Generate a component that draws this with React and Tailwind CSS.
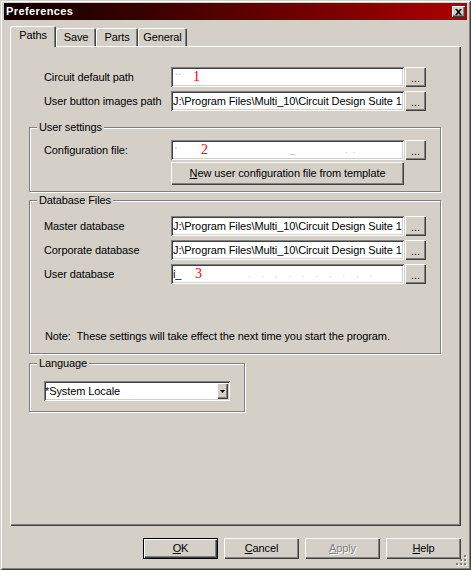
import React from "react";

// classic 3D bevels
const raised =
  "bg-[#d4d0c8] shadow-[inset_1px_1px_0_#fff,inset_-1px_-1px_0_#404040,inset_-2px_-2px_0_#808080]";
const sunken =
  "bg-white shadow-[inset_1px_1px_0_#808080,inset_-1px_-1px_0_#fff,inset_2px_2px_0_#404040,inset_-2px_-2px_0_#d4d0c8]";
const etched =
  "min-w-0 border border-[#808080] shadow-[inset_1px_1px_0_#fff,1px_1px_0_#fff]";

const SUITE_PATH = "J:\\Program Files\\Multi_10\\Circuit Design Suite 1";

const Num = ({ children }) => (
  <span className="shrink-0 font-['Liberation_Serif',serif] text-[14px] leading-none tracking-normal text-[#ff0000]">
    {children}
  </span>
);

const Field = ({ children, className = "w-[233px]" }) => (
  <div
    className={`${sunken} ${className} flex h-[20px] shrink-0 items-center overflow-hidden whitespace-nowrap pl-[2px]`}
  >
    {children}
  </div>
);

const Browse = () => (
  <button
    className={`${raised} ml-px flex h-[20px] w-[21px] shrink-0 items-center justify-center pt-[2px]`}
  >
    ...
  </button>
);

const PathRow = ({ label, children }) => (
  <div className="flex h-[20px] items-center">
    <span className="w-[127px] shrink-0">{label}</span>
    <Field>{children}</Field>
    <Browse />
  </div>
);

const Group = ({ title, className, children }) => (
  <fieldset className={`${etched} ml-[19px] ${className}`}>
    <legend className="ml-[7px] bg-[#d4d0c8] px-[2px] leading-[13px]">{title}</legend>
    {children}
  </fieldset>
);

const Tab = ({ label, active, className }) => (
  <div
    className={`${className} flex items-center justify-center rounded-t-[2px] bg-[#d4d0c8] shadow-[inset_1px_1px_0_#fff,inset_-1px_0_0_#404040,inset_-2px_0_0_#808080] ${
      active ? "relative z-10 -mb-px h-[21px] pb-[2px]" : "h-[18px]"
    }`}
  >
    {label}
  </div>
);

const DialogButton = ({ children, isDefault, disabled }) => (
  <button
    className={`${raised} h-[21px] w-[75px] ${
      isDefault ? "border border-black" : ""
    } ${disabled ? "text-[#808080] [text-shadow:1px_1px_0_#fff]" : ""}`}
  >
    {children}
  </button>
);

const Hot = ({ children }) => <span className="underline underline-offset-[1px]">{children}</span>;

// faint leftovers of cleared text in a field
const Specks = ({ count, className }) => (
  <span className={`flex shrink-0 justify-between text-[9px] text-[#c4c4c4] ${className}`}>
    {Array.from({ length: count }, (_, i) => (
      <span key={i}>.</span>
    ))}
  </span>
);

export default function App() {
  return (
    <div className="relative h-[570px] w-[471px] bg-[#d4d0c8] px-[4px] pt-[3px] font-['Liberation_Sans',Arial,sans-serif] text-[11px] leading-[13px] tracking-[-0.1px] text-black shadow-[inset_1px_1px_0_#d4d0c8,inset_-1px_-1px_0_#404040,inset_2px_2px_0_#fff,inset_-2px_-2px_0_#808080]">
      {/* caption */}
      <div className="flex h-[17px] items-center justify-between bg-linear-to-r from-[#100000] to-[#b00000] pl-[2px] pr-[2px]">
        <span className="font-bold tracking-[0.4px] text-white">Preferences</span>
        <button className={`${raised} flex h-[11px] w-[13px] items-center justify-center`}>
          <svg width="7" height="6" viewBox="0 0 7 6">
            <path d="M0 0h2l1.5 1.7L5 0h2L4.5 3 7 6H5L3.5 4.3 2 6H0l2.5-3z" fill="#000" />
          </svg>
        </button>
      </div>

      <div className="px-[6px]">
        {/* tab strip */}
        <div className="mt-[6px] flex h-[20px] items-end">
          <Tab label="Paths" active className="w-[46px]" />
          <Tab label="Save" className="w-[40px]" />
          <Tab label="Parts" className="w-[42px]" />
          <Tab label="General" className="w-[49px]" />
        </div>

        {/* tab page */}
        <div className="relative flex h-[480px] w-[451px] flex-col pt-[21px] shadow-[inset_1px_1px_0_#fff,inset_-1px_-1px_0_#404040,inset_-2px_-2px_0_#808080]">
          <div className="ml-[34px] flex flex-col gap-[4px]">
            <PathRow label="Circuit default path">
              <span className="inline-block w-[20px] shrink-0 pl-[2px] text-[9px] text-[#9a9a9a]">``</span>
              <Num>1</Num>
            </PathRow>
            <PathRow label="User button images path">{SUITE_PATH}</PathRow>
          </div>

          <Group title="User settings" className="mt-[10px] w-[412px]">
            <div className="pb-[6px] pl-[14px] pt-[6px]">
              <PathRow label="Configuration file:">
                <span className="inline-block w-[28px] shrink-0 pl-[2px] text-[9px] text-[#9a9a9a]">'</span>
                <Num>2</Num>
                <span className="ml-[82px] shrink-0 text-[9px] text-[#a0a0a0]">_</span>
                <Specks count={2} className="ml-[50px] w-[10px]" />
              </PathRow>
              <button className={`${raised} ml-[127px] mt-[2px] h-[23px] w-[233px]`}>
                <Hot>N</Hot>ew user configuration file from template
              </button>
            </div>
          </Group>

          <Group title="Database Files" className="mt-[2px] w-[412px]">
            <div className="pb-[10px] pl-[14px] pt-[9px]">
              <div className="flex flex-col gap-[4px]">
                <PathRow label="Master database">{SUITE_PATH}</PathRow>
                <PathRow label="Corporate database">{SUITE_PATH}</PathRow>
                <PathRow label="User database">
                  <span className="inline-block w-[22px] shrink-0">i_</span>
                  <Num>3</Num>
                  <Specks count={10} className="ml-[46px] w-[124px]" />
                </PathRow>
              </div>
              <p className="ml-px mt-[46px]">
                Note:&nbsp; These settings will take effect the next time you start the program.
              </p>
            </div>
          </Group>

          <Group title="Language" className="mt-[3px] w-[216px]">
            <div className="pb-[10px] pl-[14px] pt-[11px]">
              <div className={`${sunken} flex h-[20px] w-[186px] items-stretch py-[2px] pr-[2px]`}>
                <span className="flex flex-1 items-center pl-[1px]">*System Locale</span>
                <span className={`${raised} flex w-[11px] items-center justify-center`}>
                  <svg width="5" height="3" viewBox="0 0 5 3">
                    <path d="M0 0h5L2.5 3z" fill="#000" />
                  </svg>
                </span>
              </div>
            </div>
          </Group>
        </div>

        {/* dialog buttons */}
        <div className="mt-[12px] flex h-[21px] w-[451px] justify-end gap-[6px]">
          <DialogButton isDefault>
            <Hot>O</Hot>K
          </DialogButton>
          <DialogButton>
            <Hot>C</Hot>ancel
          </DialogButton>
          <DialogButton disabled>
            <Hot>A</Hot>pply
          </DialogButton>
          <DialogButton>
            <Hot>H</Hot>elp
          </DialogButton>
        </div>
      </div>

      {/* size grip */}
      <svg className="absolute bottom-[3px] right-[3px]" width="12" height="12" viewBox="0 0 12 12">
        {[
          [8, 0],
          [8, 4],
          [4, 4],
          [8, 8],
          [4, 8],
          [0, 8],
        ].map(([x, y]) => (
          <g key={`${x}-${y}`}>
            <rect x={x + 1} y={y + 1} width="2" height="2" fill="#fff" />
            <rect x={x} y={y} width="2" height="2" fill="#808080" />
          </g>
        ))}
      </svg>
    </div>
  );
}
